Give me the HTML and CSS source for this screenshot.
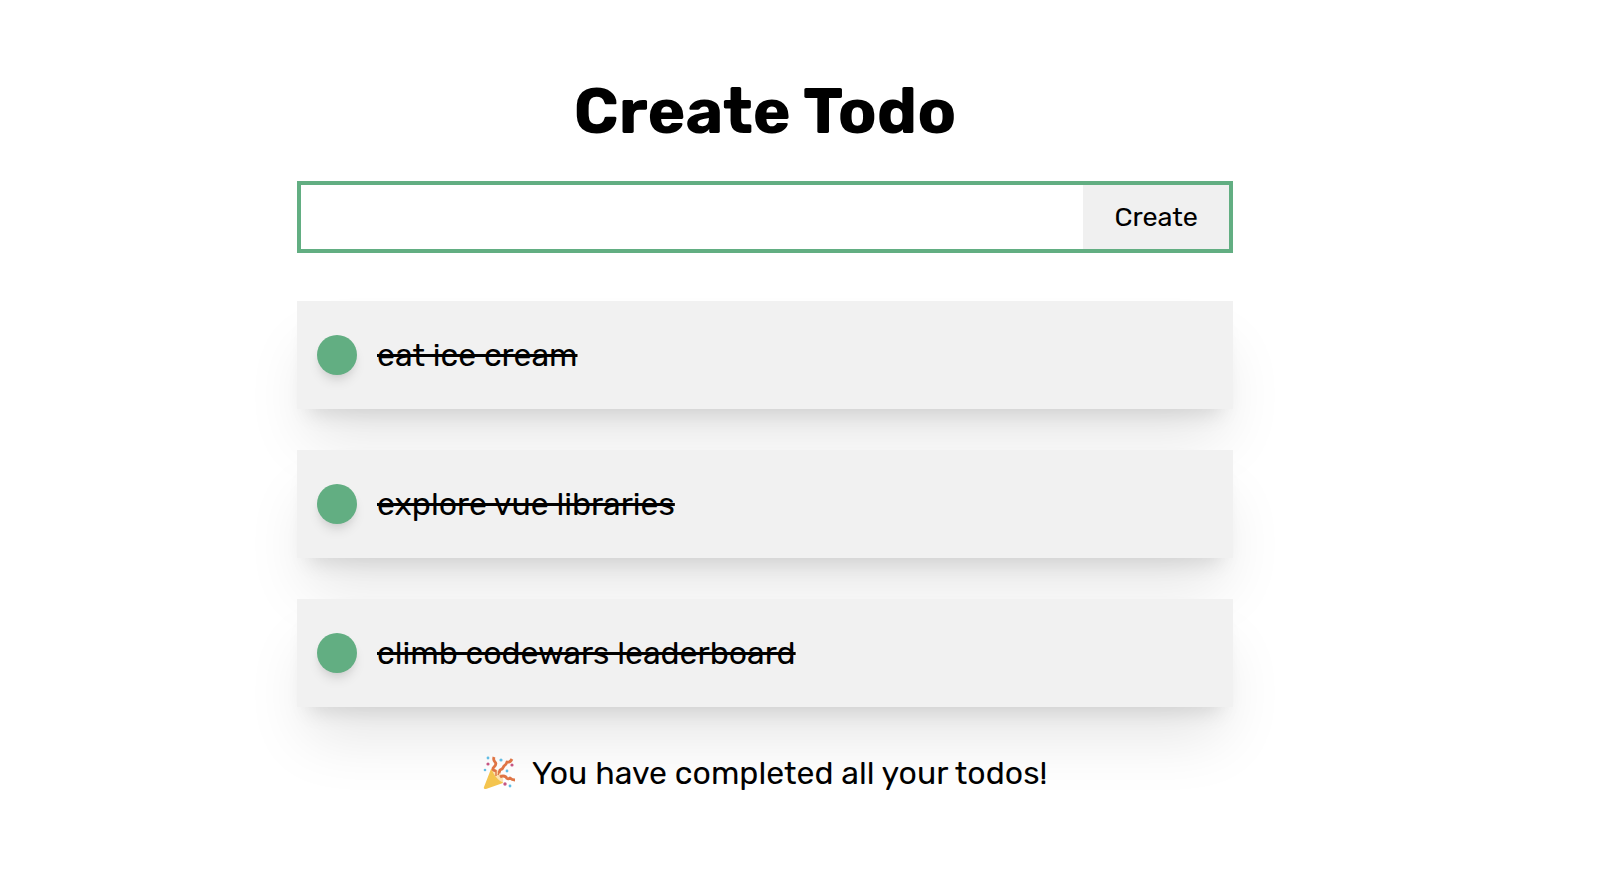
FILE: index.html
```html
<!DOCTYPE html>
<html lang="en">
<head>
<meta charset="utf-8">
<title>Create Todo</title>
<link rel="stylesheet" href="styles.css">
</head>
<body>
<main class="app">
  <h1 class="title">Create Todo</h1>
  <form class="create">
    <input class="create-input" type="text" aria-label="New todo">
    <button class="create-button" type="button">Create</button>
  </form>
  <ul class="todos">
    <li class="todo">
      <input class="check" type="checkbox" id="todo-1" checked>
      <label class="todo-label" for="todo-1">eat ice cream</label>
    </li>
    <li class="todo">
      <input class="check" type="checkbox" id="todo-2" checked>
      <label class="todo-label" for="todo-2">explore vue libraries</label>
    </li>
    <li class="todo">
      <input class="check" type="checkbox" id="todo-3" checked>
      <label class="todo-label" for="todo-3">climb codewars leaderboard</label>
    </li>
  </ul>
  <p class="message">
    <svg class="party" viewBox="5 4 34 34" aria-hidden="true">
      <path d="M13 17Q22 20 25 31L8 37Q5 37 6 35Z" fill="#f4c44e"/>
      <path d="M14 17Q18 16 22 21T25 30Q22 30 18 25T14 17Z" fill="#fbe3b4"/>
      <g fill="none" stroke="#df7545" stroke-linejoin="round">
        <path d="M16 5Q15 8 17 10T16 15T18 19" stroke-width="2.8"/>
        <path d="M34 7Q32 11 29 10Q28 13 26 14Q25 17 22 18L21 21" stroke-width="2.8"/>
        <path d="M22 25Q25 23 28 25Q29 28 32 26Q34 28 37 28" stroke-width="2.8"/>
        <path d="M18 18V24M22 18L20 23" stroke-width="1.4"/>
      </g>
      <g fill="#62bde4"><circle cx="10" cy="6" r="1.4"/><circle cx="23" cy="8" r="1.6"/><circle cx="7" cy="18" r="1.3"/><circle cx="29" cy="19" r="1.4"/><circle cx="32" cy="34" r="1.4"/></g>
      <g fill="#c65582"><circle cx="10" cy="12" r="1.6"/><circle cx="34" cy="13" r="1.6"/><circle cx="27" cy="32" r="1.7"/></g>
    </svg>
    <span>You have completed all your todos!</span>
  </p>
</main>
</body>
</html>
```
FILE: styles.css
```css
* {
  box-sizing: border-box;
}

body {
  margin: 0;
  padding: 72px 72px 72px 0;
  background: #fff;
  color: #000;
  font-family: Rubik, Inter, sans-serif;
  font-size: 32px;
  line-height: 40px;
}

.app {
  max-width: 936px;
  margin: 0 auto;
}

.title {
  margin: 0 0 31px;
  font-size: 64px;
  line-height: 78px;
  font-weight: 700;
  text-align: center;
}

.create {
  display: flex;
  height: 72px;
  margin-bottom: 48px;
  border: 4px solid #62ae82;
}

.create-input {
  flex: 1;
  min-width: 0;
  padding: 0 16px;
  border: 0;
  outline: 0;
  background: #fff;
  font: inherit;
}

.create-button {
  padding: 0 31px;
  border: 0;
  background: #f0f0f0;
  color: #000;
  font-family: inherit;
  font-size: 27px;
}

.todos {
  display: grid;
  gap: 41px;
  margin: 0;
  padding: 0;
  list-style: none;
}

.todo {
  display: flex;
  align-items: center;
  gap: 20px;
  min-height: 108px;
  padding: 20px;
  background: #f1f1f1;
  box-shadow: 0 40px 62px -10px rgb(0 0 0 / 0.1), 0 16px 20px -12px rgb(0 0 0 / 0.12);
}

.check {
  flex: none;
  width: 40px;
  height: 40px;
  margin: 0;
  border-radius: 50%;
  appearance: none;
  box-shadow: 0 8px 12px -2px rgb(0 0 0 / 0.1), 0 4px 8px -4px rgb(0 0 0 / 0.1);
}

.check:checked {
  background: #62ae82;
}

.check:checked + .todo-label {
  text-decoration: line-through;
}

.message {
  display: flex;
  justify-content: center;
  align-items: center;
  gap: 15px;
  margin: 46px 0 0;
}

.party {
  width: 34px;
  height: 34px;
}
```
